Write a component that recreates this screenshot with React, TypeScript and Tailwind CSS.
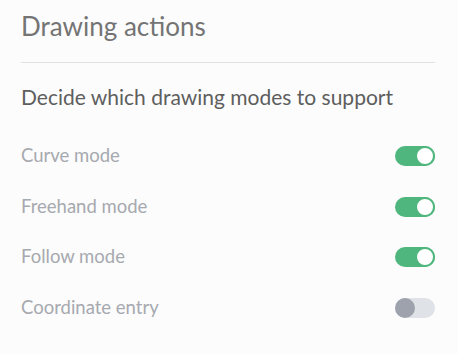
import { useState } from "react";

const modes = [
  { label: "Curve mode", on: true },
  { label: "Freehand mode", on: true },
  { label: "Follow mode", on: true },
  { label: "Coordinate entry", on: false },
];

function Toggle({ checked, onChange }: { checked: boolean; onChange: () => void }) {
  return (
    <button
      onClick={onChange}
      className={`relative w-[40px] h-[20px] rounded-full ${checked ? "bg-[#4fb67d]" : "bg-[#dfe2e6]"}`}
    >
      <span
        className={`absolute top-0 h-[20px] w-[20px] rounded-full ${
          checked ? "right-0 bg-white border-2 border-[#4fb67d]" : "left-0 bg-[#9ea2ad]"
        }`}
      />
    </button>
  );
}

export default function App() {
  const [state, setState] = useState(modes.map((m) => m.on));

  return (
    <div className="w-[458px] h-[354px] bg-[#fcfcfc] font-['Lato',sans-serif] px-[21px]">
      <div className="pt-[10px] pb-[20px] border-b border-[#e2e2e2] mr-[2px]">
        <h1 className="text-[26px] leading-[32px] text-[#747474]">Drawing actions</h1>
      </div>
      <p className="mt-[22px] text-[21px] leading-[24px] text-[#5e5e5e]">
        Decide which drawing modes to support
      </p>
      <div className="mt-[22px] flex flex-col pr-[2px]">
        {modes.map((m, i) => (
          <div key={m.label} className="h-[50.5px] flex items-center justify-between">
            <span className="text-[18.5px] text-[#a6a9af]">{m.label}</span>
            <Toggle
              checked={state[i]}
              onChange={() => setState(state.map((v, j) => (j === i ? !v : v)))}
            />
          </div>
        ))}
      </div>
    </div>
  );
}
